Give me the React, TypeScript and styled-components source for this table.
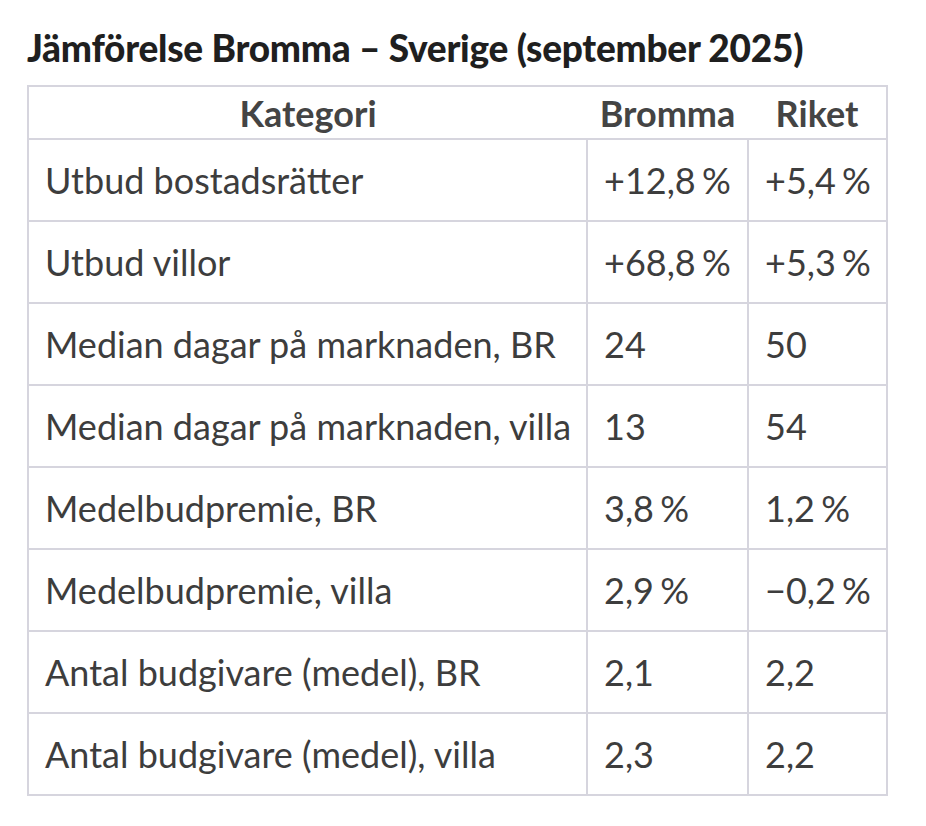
import styled, { createGlobalStyle } from "styled-components";

const GlobalStyle = createGlobalStyle`
  html, body {
    margin: 0;
    padding: 0;
    background: #ffffff;
  }
  body {
    font-family: Lato, "Open Sans", sans-serif;
    color: #3d3d3d;
  }
`;

const Page = styled.div`
  padding: 24px 0 0 27px;
`;

const Title = styled.h2`
  margin: 0 0 13px 0;
  font-size: 37px;
  line-height: 48px;
  font-weight: 900;
  color: #1f1f1f;
  letter-spacing: -0.25px;
`;

const Table = styled.table`
  border-collapse: collapse;
  width: 859px;
  border: 2px solid #d6d5de;
  table-layout: fixed;
`;

const HeadCell = styled.th`
  height: 51px;
  padding: 0;
  font-size: 36px;
  font-weight: 700;
  color: #444444;
  text-align: center;
  vertical-align: middle;
  border-bottom: 2px solid #d6d5de;
`;

const Cell = styled.td<{ $num?: boolean }>`
  height: 80px;
  padding: 0 16px;
  font-size: 36px;
  font-weight: 400;
  color: #3d3d3d;
  white-space: nowrap;
  vertical-align: middle;
  border: 2px solid #d6d5de;
  word-spacing: ${(p) => (p.$num ? "-3px" : "normal")};
`;

type Row = { label: string; bromma: string; riket: string };

const rows: Row[] = [
  { label: "Utbud bostadsrätter", bromma: "+12,8\u00A0%", riket: "+5,4\u00A0%" },
  { label: "Utbud villor", bromma: "+68,8\u00A0%", riket: "+5,3\u00A0%" },
  { label: "Median dagar på marknaden, BR", bromma: "24", riket: "50" },
  { label: "Median dagar på marknaden, villa", bromma: "13", riket: "54" },
  { label: "Medelbudpremie, BR", bromma: "3,8\u00A0%", riket: "1,2\u00A0%" },
  { label: "Medelbudpremie, villa", bromma: "2,9\u00A0%", riket: "−0,2\u00A0%" },
  { label: "Antal budgivare (medel), BR", bromma: "2,1", riket: "2,2" },
  { label: "Antal budgivare (medel), villa", bromma: "2,3", riket: "2,2" },
];

export default function App() {
  return (
    <>
      <GlobalStyle />
      <Page>
        <Title>Jämförelse Bromma – Sverige (september 2025)</Title>
        <Table>
          <colgroup>
            <col style={{ width: 559 }} />
            <col style={{ width: 161 }} />
            <col style={{ width: 139 }} />
          </colgroup>
          <thead>
            <tr>
              <HeadCell>Kategori</HeadCell>
              <HeadCell>Bromma</HeadCell>
              <HeadCell>Riket</HeadCell>
            </tr>
          </thead>
          <tbody>
            {rows.map((r) => (
              <tr key={r.label}>
                <Cell>{r.label}</Cell>
                <Cell $num>{r.bromma}</Cell>
                <Cell $num>{r.riket}</Cell>
              </tr>
            ))}
          </tbody>
        </Table>
      </Page>
    </>
  );
}
